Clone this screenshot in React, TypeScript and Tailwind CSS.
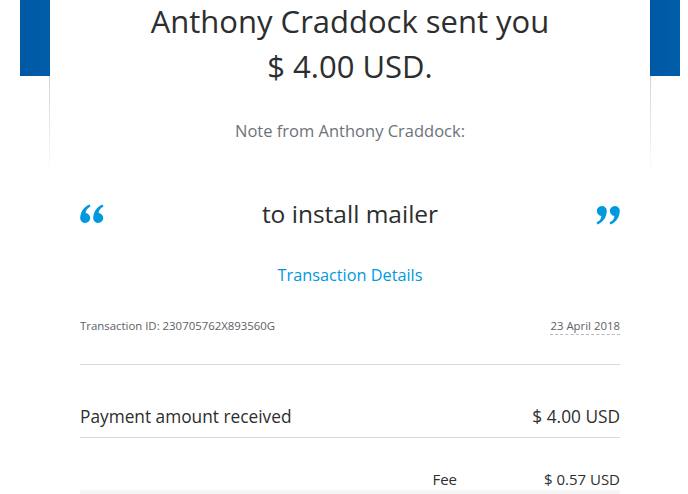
import React from "react";

const QuoteMark = ({ flip }: { flip?: boolean }) => (
  <svg
    width="24"
    height="21"
    viewBox="0 0 24 20"
    className={`fill-[#0099de] ${flip ? "rotate-180" : ""}`}
  >
    <path d="M9.5 0 L10.5 2 C7.5 3.5 5.9 5.5 5.6 8.6 A5 5 0 1 1 0.2 14 C0.2 7.5 3.8 2.5 9.5 0 Z" />
    <path d="M22.5 0 L23.5 2 C20.5 3.5 18.9 5.5 18.6 8.6 A5 5 0 1 1 13.2 14 C13.2 7.5 16.8 2.5 22.5 0 Z" />
  </svg>
);

const SideBar = ({ right }: { right?: boolean }) => (
  <div className={`w-[30px] shrink-0 flex flex-col ${right ? "items-start" : "items-end"}`}>
    <div className="w-[30px] h-[76px] bg-gradient-to-r from-[#0058a3] to-[#005ea8]" />
    <div className="w-px h-[100px] bg-gradient-to-b from-[#d2d2d2] to-white" />
  </div>
);

export default function App() {
  return (
    <div className="w-[688px] h-[494px] overflow-hidden bg-white font-['Open_Sans',sans-serif] text-[#2c2e2f]">
      <div className="flex pl-[20px]">
        <SideBar />
        <div className="w-[600px] shrink-0 px-[30px]">
          {/* Header */}
          <h1 className="-mt-px text-center text-[31px] leading-[45px] font-normal">
            Anthony Craddock sent you
            <br />$ 4.00 USD.
          </h1>
          <p className="mt-[30px] text-center text-[16.5px] leading-[24px] text-[#6c7378]">
            Note from Anthony Craddock:
          </p>

          {/* Note */}
          <div className="mt-[55px] flex items-center justify-between">
            <QuoteMark />
            <span className="text-[24.5px] leading-[32px]">to install mailer</span>
            <QuoteMark flip />
          </div>

          <div className="mt-[33px] text-center">
            <a className="text-[16.3px] leading-[24px] text-[#0099de]">Transaction Details</a>
          </div>

          {/* Transaction meta */}
          <div className="mt-[30px] flex justify-between items-center text-[11.4px] leading-[18px] text-[#5b6166]">
            <span>Transaction ID: 230705762X893560G</span>
            <span className="border-b border-dashed border-[#b8b8b8] leading-[16px]">23 April 2018</span>
          </div>

          <div className="mt-[29px] border-t border-[#d8d8d8]" />

          <div className="mt-[40px] flex justify-between items-center text-[17.3px] leading-[24px] pb-[8px] border-b border-[#d8d8d8]">
            <span>Payment amount received</span>
            <span>$ 4.00 USD</span>
          </div>

          <div className="mt-[31px] flex justify-end text-[15px] leading-[20px]">
            <span>Fee</span>
            <span className="w-[163px] text-right">$ 0.57 USD</span>
          </div>
          <div className="mt-[1px] h-[20px] bg-[#f5f5f5]" />
        </div>
        <SideBar right />
      </div>
    </div>
  );
}
